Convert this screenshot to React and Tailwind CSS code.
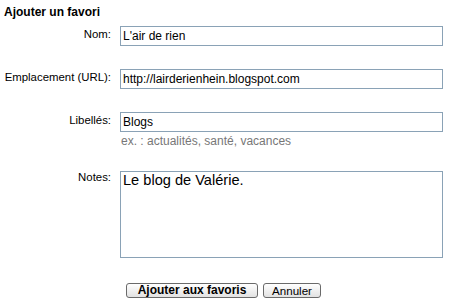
export default function App() {
  const font = { fontFamily: '"Liberation Sans", Arial, sans-serif' };
  return (
    <div className="w-[460px] h-[305px] bg-white text-black overflow-hidden" style={font}>
      <div className="pt-[5px] pl-[4px] text-[12px] leading-[14px] font-bold">Ajouter un favori</div>

      <div className="mt-[7px] flex flex-col">
        <div className="flex items-start">
          <div className="w-[112px] pr-[1px] text-right text-[11.4px] leading-[14px] pt-[1px]">Nom:</div>
          <div className="ml-[8px] w-[323px] h-[20px] border border-[#8aa2b6] pl-[2px] text-[12px] leading-[18px]">L'air de rien</div>
        </div>

        <div className="mt-[23px] flex items-start">
          <div className="w-[112px] pr-[1px] text-right text-[11.4px] leading-[14px] pt-[1px]">Emplacement (URL):</div>
          <div className="ml-[8px] w-[323px] h-[20px] border border-[#8aa2b6] pl-[2px] text-[12px] leading-[18px]">http://lairderienhein.blogspot.com</div>
        </div>

        <div className="mt-[23px] flex items-start">
          <div className="w-[112px] pr-[1px] text-right text-[11.4px] leading-[14px] pt-[1px]">Libellés:</div>
          <div className="ml-[8px] flex flex-col">
            <div className="w-[323px] h-[20px] border border-[#8aa2b6] pl-[2px] text-[12px] leading-[18px]">Blogs</div>
            <div className="mt-[2px] pl-[1px] text-[12px] leading-[14px] text-[#777777]">ex. : actualités, santé, vacances</div>
          </div>
        </div>

        <div className="mt-[23px] flex items-start">
          <div className="w-[112px] pr-[1px] text-right text-[11.4px] leading-[14px] -mt-[1px]">Notes:</div>
          <div className="ml-[8px] w-[323px] h-[87px] border border-[#8aa2b6] pl-[2px] text-[14.6px] leading-[17px]">Le blog de Valérie.</div>
        </div>

        <div className="mt-[25px] flex pl-[126px] gap-[5px]">
          <button className="h-[15px] w-[132px] border border-[#6a6a6a] rounded-[3px] bg-gradient-to-b from-white to-[#e2e2e2] text-[12px] leading-[13px] font-bold text-black" style={font}>Ajouter aux favoris</button>
          <button className="h-[15px] w-[58px] border border-[#6a6a6a] rounded-[3px] bg-gradient-to-b from-white to-[#e2e2e2] text-[11.6px] leading-[13px] text-black" style={font}>Annuler</button>
        </div>
      </div>
    </div>
  );
}
